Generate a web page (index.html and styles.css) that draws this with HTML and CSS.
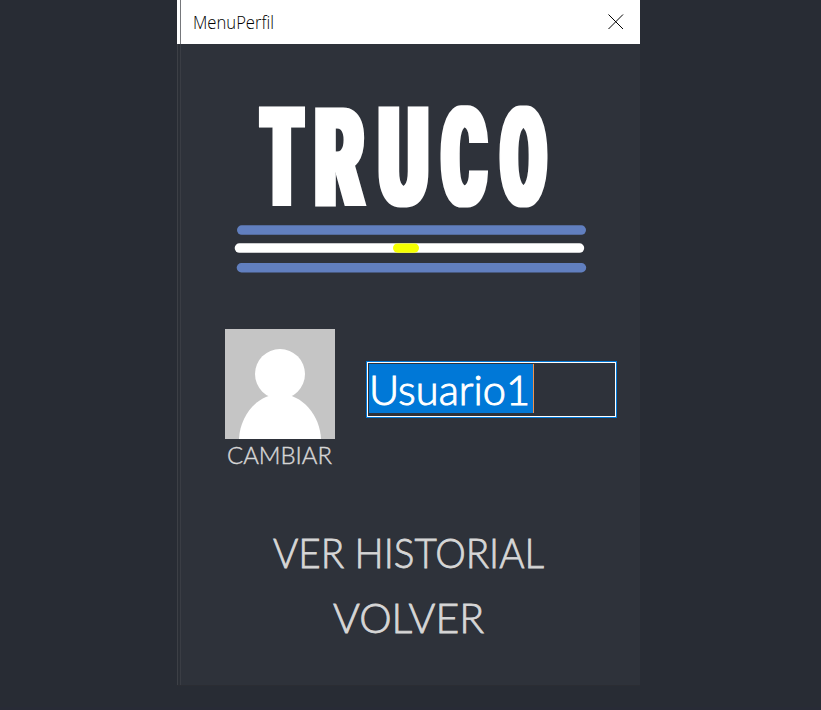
FILE: index.html
```html
<!DOCTYPE html>
<html lang="es">
<head>
<meta charset="utf-8">
<title>MenuPerfil</title>
<link rel="stylesheet" href="styles.css">
</head>
<body>
<main class="window">
  <header class="titlebar">
    <svg class="title" width="120" height="44"><text x="16" y="29" textLength="81" lengthAdjust="spacingAndGlyphs">MenuPerfil</text></svg>
    <svg class="close" width="16" height="16" viewBox="0 0 16 16"><path d="M.5 .5 15 15M15 .5 .5 15"/></svg>
  </header>
  <section class="content">
    <svg class="logo" width="370" height="195" viewBox="225 90 370 195">
      <filter id="widen" x="-5%" y="-5%" width="110%" height="110%"><feMorphology operator="dilate" radius="3 0"/></filter>
      <g filter="url(#widen)"><text class="word" y="204.5"><tspan x="261.5" textLength="41" lengthAdjust="spacingAndGlyphs">T</tspan><tspan x="315" textLength="49" lengthAdjust="spacingAndGlyphs">R</tspan><tspan x="378.5" textLength="50" lengthAdjust="spacingAndGlyphs">U</tspan><tspan x="442" textLength="44" lengthAdjust="spacingAndGlyphs">C</tspan><tspan x="501" textLength="45" lengthAdjust="spacingAndGlyphs">O</tspan></text></g>
      <rect class="blue" x="237" y="225.3" width="349" height="9.5" rx="4.75"/>
      <rect class="white" x="234.7" y="243.3" width="349.5" height="9.5" rx="4.75"/>
      <rect class="yellow" x="393" y="243.5" width="26" height="9.2" rx="4.6"/>
      <rect class="blue" x="236.7" y="263" width="349.5" height="9.5" rx="4.75"/>
    </svg>
    <div class="profile">
      <div class="avatar-box">
        <svg class="avatar" width="110" height="110" viewBox="0 0 110 110">
          <circle cx="55" cy="45" r="25"/>
          <path d="M14 110C15 86 33 65 55 65S95 86 96 110Z"/>
        </svg>
        <svg class="label" width="110" height="34"><text class="small" x="2" y="24.5" textLength="105" lengthAdjust="spacingAndGlyphs">CAMBIAR</text></svg>
      </div>
      <div class="field">
        <div class="selection"><svg width="164" height="49"><text class="name" x="0" y="41" textLength="161" lengthAdjust="spacingAndGlyphs">Usuario1</text></svg></div>
      </div>
    </div>
    <nav class="menu">
      <svg width="280" height="65"><text class="large" x="4" y="42" textLength="271" lengthAdjust="spacingAndGlyphs">VER HISTORIAL</text></svg>
      <svg width="280" height="65"><text class="large" x="64" y="42" textLength="151" lengthAdjust="spacingAndGlyphs">VOLVER</text></svg>
    </nav>
  </section>
</main>
</body>
</html>
```
FILE: styles.css
```css
* { box-sizing: border-box; }
body {
  margin: 0;
  height: 710px;
  background: #282c34;
  border-bottom: 3px solid #282b36;
  overflow: hidden;
  font-family: Lato, "Open Sans", sans-serif;
}
svg { display: block; flex: none; overflow: visible; }
.window {
  width: 463px;
  height: 686px;
  margin-left: 177px;
  background: linear-gradient(90deg, #3d4046 0 1px, #2b2f36 1px 3px, #3a3d44 3px 4px, #2e323a 4px);
  border-bottom: 1px solid #2b2d33;
}
.titlebar {
  height: 44px;
  display: flex;
  align-items: center;
  justify-content: space-between;
  padding-right: 16px;
  background: linear-gradient(90deg, #fff 0 3px, #75777b 3px 4px, #fff 4px);
}
.title { font: 300 18px "Open Sans", sans-serif; fill: #000; }
.close { fill: none; stroke: #000; stroke-width: 1; }
.logo { margin: 46px 0 0 48px; }
.word {
  font: 900 135px Roboto, sans-serif;
  fill: #fff;
  stroke: #fff;
  stroke-width: 3px;
}
.blue { fill: #617fbf; }
.white { fill: #fff; }
.yellow { fill: #f5ff00; }
.profile {
  display: flex;
  height: 140px;
  margin: 44px 0 0 48px;
}
.avatar { background: #c5c5c5; fill: #fff; }
.field {
  width: 251px;
  height: 57px;
  margin: 32px 0 0 31px;
  border: 1px solid #0078d7;
  outline: 1px solid #fff;
  outline-offset: -2px;
}
.selection {
  width: 165px;
  height: 49px;
  margin: 2px 0 0 2px;
  background: #0078d7;
  border-right: 1px solid #ee934f;
}
.small { font-size: 22.5px; font-weight: 300; fill: #d6d6d6; stroke: #d6d6d6; stroke-width: .4px; }
.name { font-size: 41px; font-weight: 300; fill: #fff; stroke: #fff; stroke-width: 1px; }
.large { font-size: 40.5px; font-weight: 300; fill: #d6d6d6; stroke: #d6d6d6; stroke-width: .8px; }
.menu {
  width: 280px;
  margin: 57px 0 0 92px;
}
```
